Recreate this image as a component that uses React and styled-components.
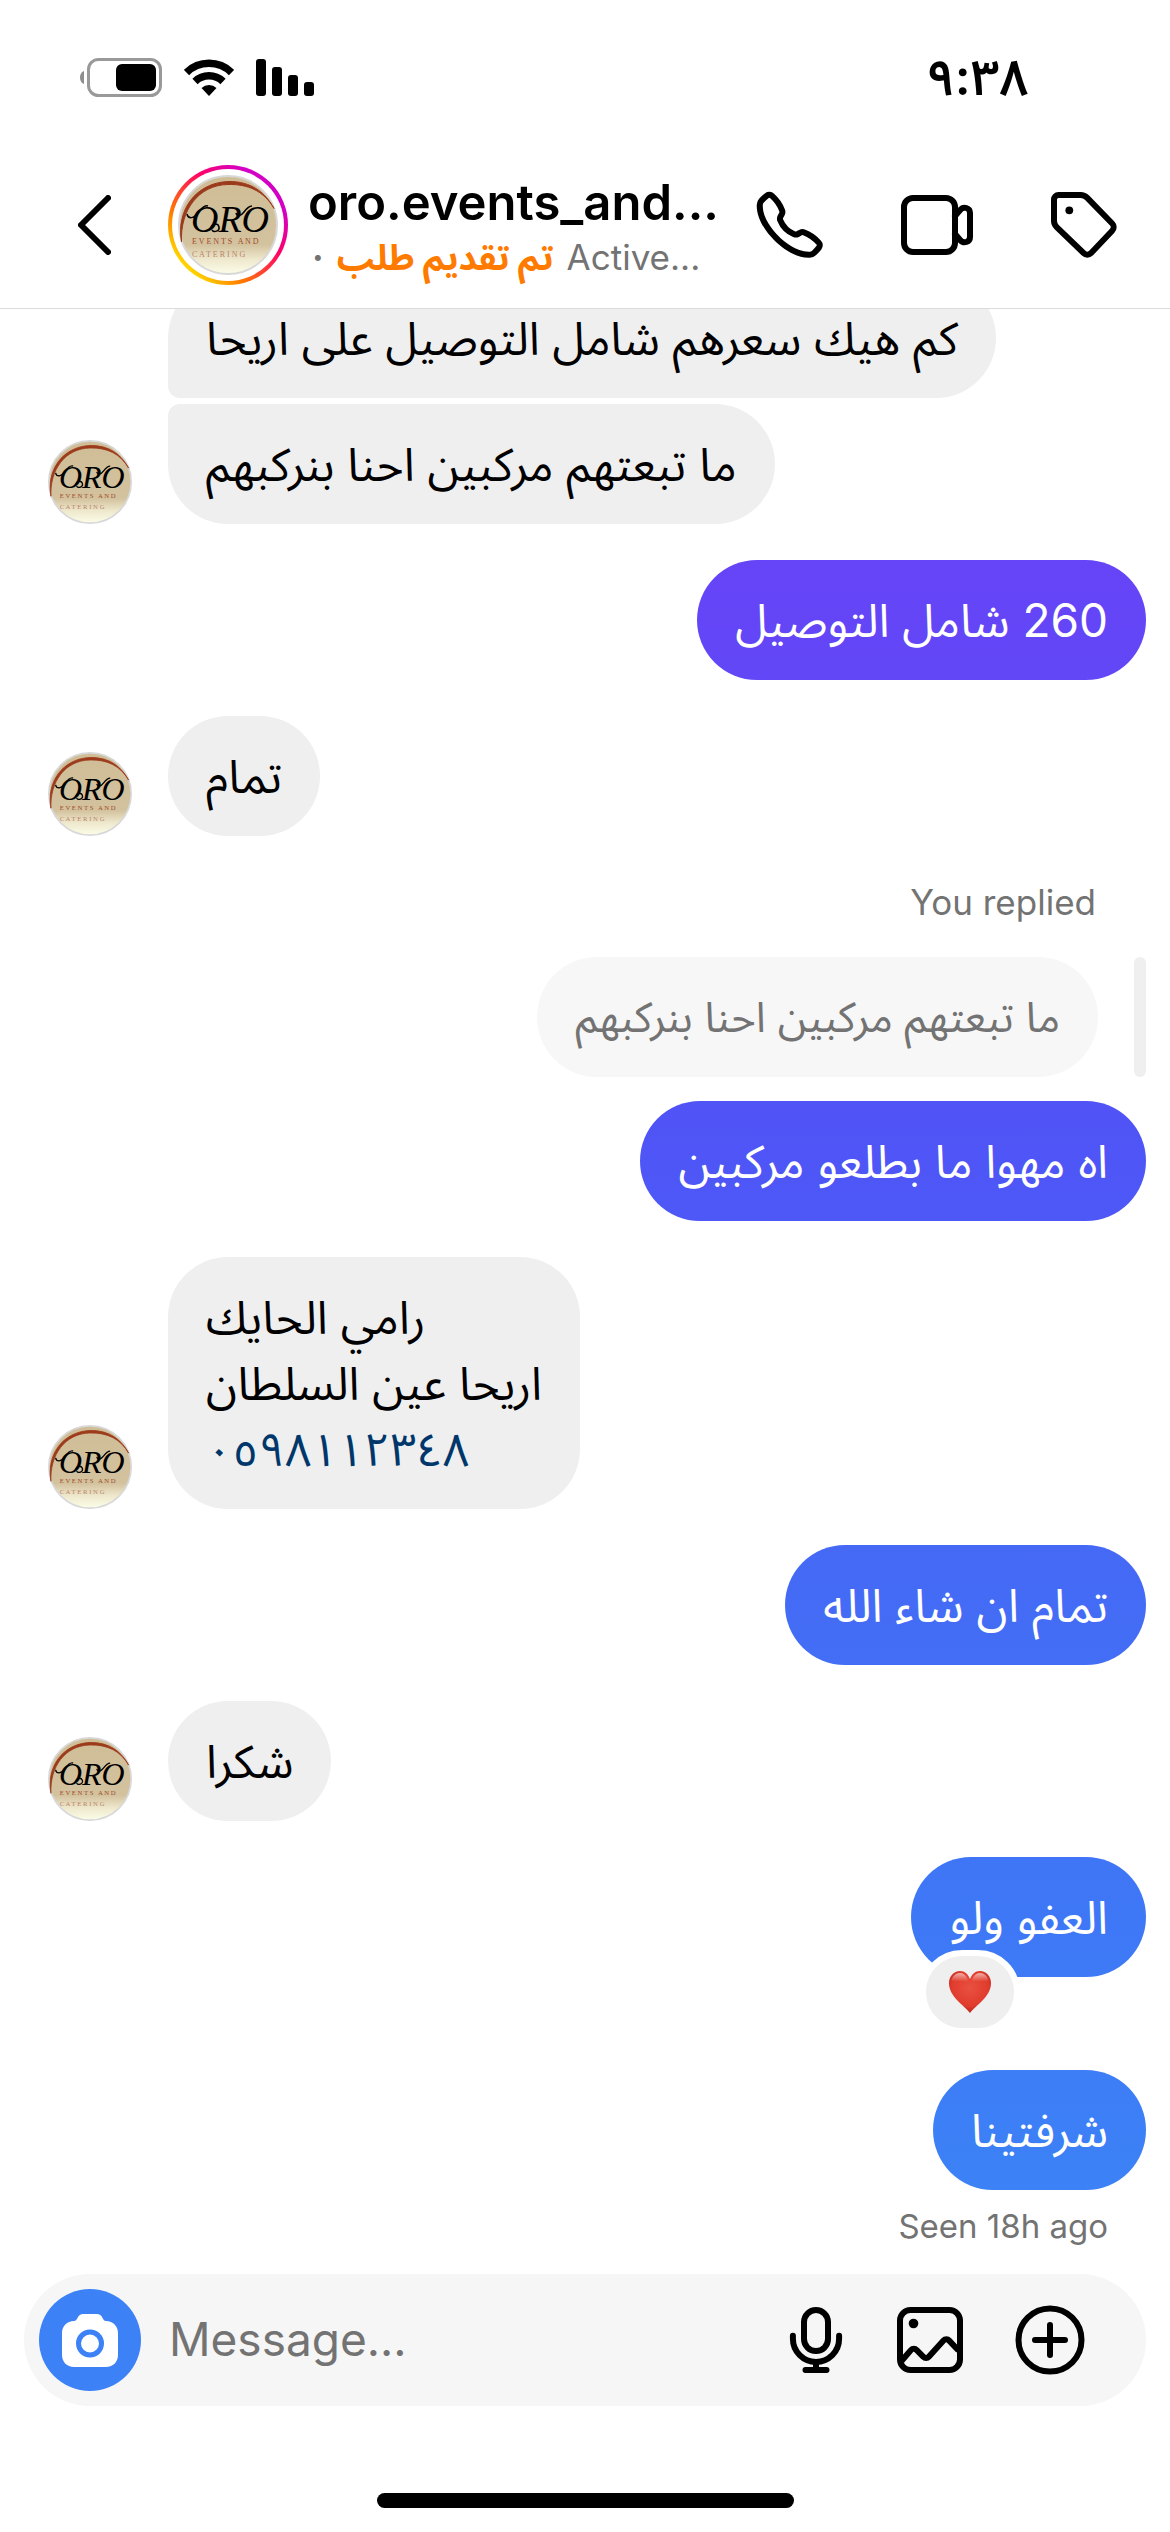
import styled, {createGlobalStyle, css} from 'styled-components';

const GlobalStyle = createGlobalStyle`
  * {
    box-sizing: border-box;
  }

  body {
    margin: 0;
    background: #fff;
    color: #000;
    font-family: Inter, 'Noto Sans Arabic', 'Noto Sans', 'DejaVu Sans', sans-serif;
  }

  button {
    padding: 0;
    border: none;
    background: none;
    color: inherit;
    cursor: pointer;
  }

  svg {
    display: block;
  }
`;

const Page = styled.div`
  display: flex;
  flex-direction: column;
  height: 100vh;
`;

/* status bar */

const StatusBar = styled.div`
  display: flex;
  align-items: center;
  justify-content: space-between;
  flex: none;
  height: 154px;
  padding: 0 142px 0 80px;
`;

const StatusIcons = styled.div`
  display: flex;
  align-items: center;
  gap: 22px;
`;

const Clock = styled.time`
  font-size: 50px;
  font-weight: 600;
  line-height: 60px;
`;

/* header */

const Header = styled.header`
  display: flex;
  align-items: center;
  flex: none;
  height: 155px;
  padding: 0 50px 12px 78px;
  border-bottom: 1px solid #dbdbdb;
`;

const BackButton = styled.button`
  margin-right: 57px;
`;

const StoryRing = styled.div`
  flex: none;
  padding: 4px;
  border-radius: 50%;
  background: linear-gradient(45deg, #ffd600 15%, #ff7a00 32%, #ff0169 60%, #d300c5 80%);
`;

const StoryGap = styled.div`
  padding: 6px;
  border-radius: 50%;
  background: #fff;
`;

const Contact = styled.div`
  flex: 1;
  min-width: 0;
  padding-top: 8px;
  margin-left: 20px;
`;

const ContactName = styled.h1`
  margin: 0;
  font-size: 49px;
  font-weight: 600;
  line-height: 56px;
  white-space: nowrap;
`;

const ContactStatus = styled.div`
  display: flex;
  align-items: center;
  gap: 13px;
  padding-left: 4px;
  color: #737373;
  font-size: 35px;
  line-height: 52px;
  white-space: nowrap;
`;

const StatusDot = styled.span`
  font-weight: 700;
`;

const OrderStatus = styled.span`
  color: #ff7a00;
  font-weight: 700;
`;

const HeaderActions = styled.div`
  display: flex;
  gap: 75px;
`;

/* thread */

const Thread = styled.main`
  display: flex;
  flex: 1;
  flex-direction: column;
  justify-content: flex-end;
  gap: 36px;
  min-height: 0;
  padding: 0 24px 28px;
  overflow: hidden;
`;

const Received = styled.div`
  display: flex;
  align-items: flex-end;
  flex: none;
  gap: 36px;
  padding-left: 24px;
`;

const Stack = styled.div`
  display: flex;
  flex-direction: column;
  align-items: flex-start;
  gap: 6px;
`;

const Sent = styled.div`
  display: flex;
  flex: none;
  flex-direction: column;
  align-items: flex-end;
  ${props => props.$reacted && css`
    margin-bottom: 57px;
  `}
`;

const Bubble = styled.div`
  position: relative;
  padding: 27px 38px;
  border-radius: 60px;
  background: #efefef;
  font-size: 46px;
  line-height: 66px;
  white-space: nowrap;
  ${props => props.$place === 'first' && css`
    border-bottom-left-radius: 12px;
  `}
  ${props => props.$place === 'last' && css`
    border-top-left-radius: 12px;
  `}
`;

const SentBubble = styled(Bubble)`
  background: linear-gradient(
    #6644f7 22%,
    #5152f5 43%,
    #4d58f7 48%,
    #4569f5 61%,
    #3f75f6 73%,
    #3c82f6 87%
  ) fixed;
  color: #fff;
`;

const QuotedBubble = styled(Bubble)`
  background: #f7f7f7;
  color: #737373;
  font-size: 42px;
`;

const Line = styled.div`
  text-align: left;
`;

const PhoneLink = styled.a`
  color: #00376b;
  text-decoration: none;
`;

const ReplyLabel = styled.div`
  margin: 8px 50px 33px 0;
  color: #737373;
  font-size: 35px;
  line-height: 44px;
`;

const Quote = styled.div`
  display: flex;
  gap: 36px;
  margin-bottom: 24px;
`;

const QuoteBar = styled.div`
  width: 12px;
  border-radius: 6px;
  background: #efefef;
`;

const Reaction = styled.button`
  position: absolute;
  left: 9px;
  bottom: -57px;
  display: flex;
  align-items: center;
  justify-content: center;
  width: 100px;
  height: 84px;
  border: 6px solid #fff;
  border-radius: 42px;
  background: #efefef;
`;

const Seen = styled.div`
  margin: 16px 38px 0 0;
  color: #737373;
  font-size: 33px;
  line-height: 40px;
`;

/* composer */

const Composer = styled.form`
  display: flex;
  align-items: center;
  flex: none;
  height: 132px;
  margin: 0 24px;
  padding: 0 60px 0 15px;
  border-radius: 66px;
  background: #f6f6f6;
`;

const CameraButton = styled.button`
  display: flex;
  align-items: center;
  justify-content: center;
  flex: none;
  width: 102px;
  height: 102px;
  border-radius: 50%;
  background: #3c82f6;
`;

const MessageInput = styled.input`
  flex: 1;
  min-width: 0;
  padding: 0 0 2px 28px;
  border: none;
  outline: none;
  background: none;
  font: inherit;
  font-size: 46px;

  &::placeholder {
    color: #737373;
    opacity: 1;
  }
`;

const ComposerActions = styled.div`
  display: flex;
  gap: 42px;

  button:last-child {
    margin-left: 6px;
  }
`;

const HomeIndicator = styled.div`
  flex: none;
  align-self: center;
  width: 417px;
  height: 15px;
  margin: 87px 0 24px;
  border-radius: 8px;
  background: #000;
`;

/* icons */

const Glyph = ({children}) => (
  <svg width="72" height="72" viewBox="0 0 24 24" fill="none" stroke="currentColor" strokeWidth="2" strokeLinecap="round" strokeLinejoin="round">
    {children}
  </svg>
);

const BatteryIcon = () => (
  <svg width="82" height="39" viewBox="0 0 82 39">
    <path d="M4 13v13C1 25 0 22 0 19.500S1 14 4 13Z" fill="#8e8e8e" />
    <rect x="8.500" y="1.500" width="72" height="36" rx="10" fill="none" stroke="#999" strokeWidth="3" />
    <rect x="36" y="6" width="40" height="27" rx="6" />
  </svg>
);

const WifiIcon = () => (
  <svg width="50" height="37" viewBox="0 0 50 37" fill="none" stroke="#000" strokeWidth="7.500">
    <path d="M2.500 13.500a32.300 32.300 0 0 1 45 0" />
    <path d="M11 22.500a20.200 20.200 0 0 1 28 0" />
    <path d="M25 37l-7.500-8a11 11 0 0 1 15 0Z" fill="#000" stroke="none" />
  </svg>
);

const SignalIcon = () => (
  <svg width="58" height="37" viewBox="0 0 58 37">
    <rect width="10" height="37" rx="3" />
    <rect x="16" y="8" width="10" height="29" rx="3" />
    <rect x="32" y="16" width="10" height="21" rx="3" />
    <rect x="48" y="23" width="10" height="14" rx="3" />
  </svg>
);

const BackIcon = () => (
  <svg width="33" height="60" viewBox="0 0 33 60" fill="none" stroke="currentColor" strokeWidth="6" strokeLinecap="round" strokeLinejoin="round">
    <path d="M30 3L3 30l27 27" />
  </svg>
);

const PhoneIcon = () => (
  <svg width="72" height="72" viewBox="0 0 24 24" fill="currentColor">
    <path d="M18.227 22.912c-4.913 0-9.286-3.627-11.486-5.828C4.486 14.83.731 10.291.921 5.231a3.289 3.289 0 0 1 .908-2.138 17.116 17.116 0 0 1 1.865-1.71 2.307 2.307 0 0 1 3.004.174 13.283 13.283 0 0 1 3.658 5.325 2.551 2.551 0 0 1-.19 1.941l-.455.853a.463.463 0 0 0-.024.387 7.57 7.57 0 0 0 4.077 4.075.455.455 0 0 0 .386-.024l.853-.455a2.548 2.548 0 0 1 1.94-.19 13.278 13.278 0 0 1 5.326 3.658 2.309 2.309 0 0 1 .174 3.003 17.319 17.319 0 0 1-1.71 1.866 3.29 3.29 0 0 1-2.138.91 10.27 10.27 0 0 1-.368.006Zm-13.144-20a.27.27 0 0 0-.167.054A15.121 15.121 0 0 0 3.28 4.47a1.289 1.289 0 0 0-.36.836c-.161 4.301 3.21 8.34 5.235 10.364s6.06 5.403 10.366 5.236a1.284 1.284 0 0 0 .835-.36 15.217 15.217 0 0 0 1.504-1.637.324.324 0 0 0-.047-.41 11.62 11.62 0 0 0-4.457-3.119.545.545 0 0 0-.411.044l-.854.455a2.452 2.452 0 0 1-2.071.116 9.571 9.571 0 0 1-5.189-5.188 2.457 2.457 0 0 1 .115-2.071l.456-.855a.544.544 0 0 0 .043-.41 11.629 11.629 0 0 0-3.118-4.458.36.36 0 0 0-.244-.1Z" />
  </svg>
);

const VideoIcon = () => (
  <Glyph>
    <rect x="1" y="3" width="17" height="18" rx="3" />
    <path d="M18 9l1.700-2C20.900 5.600 23 6.300 23 8v8c0 1.700-2.100 2.400-3.300 1L18 15" />
  </Glyph>
);

const TagIcon = () => (
  <Glyph>
    <path d="M2 3.500A1.500 1.500 0 0 1 3.500 2h7.400a3 3 0 0 1 2.100.9l8.400 8.600a1.700 1.700 0 0 1 0 2.400l-7.100 7.500a1.700 1.700 0 0 1-2.400 0l-9.100-8.800A3 3 0 0 1 2 10.500Z" />
    <circle cx="7.100" cy="7.100" r="1.300" fill="currentColor" stroke="none" />
  </Glyph>
);

const MicIcon = () => (
  <Glyph>
    <rect x="8" y="2" width="8" height="13.700" rx="4" />
    <path d="M4.300 10.600v1a7.700 7.700 0 0 0 15.400 0v-1M12 19.300V22M8.500 22h7" />
  </Glyph>
);

const PhotoIcon = () => (
  <Glyph>
    <rect x="2" y="2" width="20" height="20" rx="3.500" />
    <path d="M2.500 19l3.200-3.700a1.200 1.200 0 0 1 1.800 0l2.300 2.300a1.200 1.200 0 0 0 1.800 0l4.900-5.400a1.300 1.300 0 0 1 1.900 0l3.100 3.300" strokeLinecap="butt" />
    <circle cx="6.500" cy="6.500" r="1.600" fill="currentColor" stroke="none" />
  </Glyph>
);

const PlusIcon = () => (
  <Glyph>
    <circle cx="12" cy="12" r="10.500" />
    <path d="M12 7v10M7 12h10" />
  </Glyph>
);

const CameraIcon = () => (
  <svg width="56" height="53" viewBox="0 0 56 53">
    <path d="M12 7c2 0 3-2 4-4s3-3 5-3h14c2 0 4 1 5 3s2 4 4 4c7 0 12 5 12 12v22c0 7-5 12-12 12H12C5 53 0 48 0 41V19C0 12 5 7 12 7Z" fill="#fff" />
    <circle cx="28" cy="29.500" r="11.500" fill="none" stroke="#3c82f6" strokeWidth="5" />
  </svg>
);

const HeartIcon = () => (
  <svg width="42" height="42" viewBox="0 0 42 42">
    <defs>
      <radialGradient id="heart" cx="0.500" cy="0.400" r="0.620">
        <stop offset="0" stopColor="#ea5040" />
        <stop offset="0.700" stopColor="#e03c2d" />
        <stop offset="1" stopColor="#b92318" />
      </radialGradient>
      <linearGradient id="shine" x1="0" y1="0" x2="0" y2="1">
        <stop offset="0" stopColor="#fff" stopOpacity="0.600" />
        <stop offset="0.700" stopColor="#fff" stopOpacity="0" />
      </linearGradient>
    </defs>
    <path d="M21 42C15 34 0 26 0 12 0 5 5 0 11 0c5 0 8 3 10 8 2-5 5-8 10-8 6 0 11 5 11 12 0 14-15 22-21 30Z" fill="url(#heart)" />
    <path d="M2.500 10C3 5 7 2 11 2s7 3 8 8-14 6-16.500 0ZM39.500 10C39 5 35 2 31 2s-7 3-8 8 14 6 16.500 0Z" fill="url(#shine)" />
  </svg>
);

const Logo = ({size}) => (
  <svg width={size} height={size} viewBox="0 0 100 100" role="img" aria-label="ORO Events and Catering">
    <defs>
      <linearGradient id="paper" x1="0" y1="0" x2="0" y2="1">
        <stop offset="0" stopColor="#cfbd96" />
        <stop offset="0.700" stopColor="#d3c29e" />
        <stop offset="0.850" stopColor="#eee8cd" />
        <stop offset="1" stopColor="#fcfde8" />
      </linearGradient>
    </defs>
    <circle cx="50" cy="50" r="49" fill="url(#paper)" stroke="#d8d8d8" strokeWidth="2" />
    <path d="M3.500 67C-2 36 17 8 50 6.500c24-.5 38 12 46 27C86 16 70 9 50 9.500 20 10 2 36 3.500 67Z" fill="#9c3a1c" stroke="#9c3a1c" />
    <text x="52" y="57" textAnchor="middle" fontFamily="Liberation Serif, serif" fontStyle="italic" fontSize="38">ORO</text>
    {/* swashes round the initials */}
    <path d="M9 39c1 5 7 5 11-1s7-8 10-7M33 53c1-5 7-5 8-1s-5 6-7 3M58 38c1 4 5 3 8-1s5-6 8-6" fill="none" stroke="#000" strokeWidth="1.500" />
    <text x="14" y="69" fontFamily="Liberation Serif, serif" fontSize="8" fill="#a34a2a">{'E V E N T S \u00a0 A N D'}</text>
    <text x="14" y="82" fontFamily="Liberation Serif, serif" fontSize="8" fill="#bd8468">C A T E R I N G</text>
  </svg>
);

const App = () => {
  return (
    <>
      <GlobalStyle />
      <Page>
        <StatusBar>
          <StatusIcons>
            <BatteryIcon />
            <WifiIcon />
            <SignalIcon />
          </StatusIcons>
          <Clock>٩:٣٨</Clock>
        </StatusBar>

        <Header>
          <BackButton type="button" aria-label="Back"><BackIcon /></BackButton>
          <StoryRing>
            <StoryGap><Logo size={100} /></StoryGap>
          </StoryRing>
          <Contact>
            <ContactName>oro.events_and...</ContactName>
            <ContactStatus>
              <StatusDot>·</StatusDot>
              <OrderStatus dir="rtl">تم تقديم طلب</OrderStatus>
              <span>Active...</span>
            </ContactStatus>
          </Contact>
          <HeaderActions>
            <button type="button" aria-label="Call"><PhoneIcon /></button>
            <button type="button" aria-label="Video call"><VideoIcon /></button>
            <button type="button" aria-label="Label"><TagIcon /></button>
          </HeaderActions>
        </Header>

        <Thread>
          <Received>
            <Logo size={84} />
            <Stack>
              <Bubble dir="rtl" $place="first">كم هيك سعرهم شامل التوصيل على اريحا</Bubble>
              <Bubble dir="rtl" $place="last">ما تبعتهم مركبين احنا بنركبهم</Bubble>
            </Stack>
          </Received>
          <Sent>
            <SentBubble dir="rtl">260 شامل التوصيل</SentBubble>
          </Sent>
          <Received>
            <Logo size={84} />
            <Bubble dir="rtl">تمام</Bubble>
          </Received>
          <Sent>
            <ReplyLabel>You replied</ReplyLabel>
            <Quote>
              <QuotedBubble dir="rtl">ما تبعتهم مركبين احنا بنركبهم</QuotedBubble>
              <QuoteBar />
            </Quote>
            <SentBubble dir="rtl">اه مهوا ما بطلعو مركبين</SentBubble>
          </Sent>
          <Received>
            <Logo size={84} />
            <Bubble dir="rtl">
              <Line>رامي الحايك</Line>
              <Line>اريحا عين السلطان</Line>
              <Line><PhoneLink href="tel:0598112348">٠٥٩٨١١٢٣٤٨</PhoneLink></Line>
            </Bubble>
          </Received>
          <Sent>
            <SentBubble dir="rtl">تمام ان شاء الله</SentBubble>
          </Sent>
          <Received>
            <Logo size={84} />
            <Bubble dir="rtl">شكرا</Bubble>
          </Received>
          <Sent $reacted>
            <SentBubble dir="rtl">
              العفو ولو
              <Reaction type="button" aria-label="Heart"><HeartIcon /></Reaction>
            </SentBubble>
          </Sent>
          <Sent>
            <SentBubble dir="rtl">شرفتينا</SentBubble>
            <Seen>Seen 18h ago</Seen>
          </Sent>
        </Thread>

        <Composer>
          <CameraButton type="button" aria-label="Camera"><CameraIcon /></CameraButton>
          <MessageInput type="text" aria-label="Message" placeholder="Message..." />
          <ComposerActions>
            <button type="button" aria-label="Record"><MicIcon /></button>
            <button type="button" aria-label="Photos"><PhotoIcon /></button>
            <button type="button" aria-label="More"><PlusIcon /></button>
          </ComposerActions>
        </Composer>
        <HomeIndicator />
      </Page>
    </>
  );
}

export default App;
